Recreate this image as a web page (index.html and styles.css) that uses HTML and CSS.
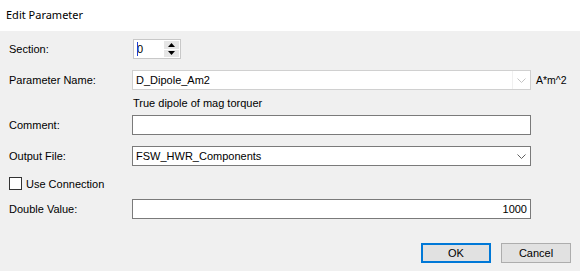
FILE: index.html
```html
<!DOCTYPE html>
<html lang="en">
<head>
  <meta charset="UTF-8">
  <title>Edit Parameter</title>
  <link rel="stylesheet" href="styles.css">
</head>
<body>

  <div class="dialog">
    <div class="titlebar">Edit Parameter</div>

    <div class="form">
      <div class="row row-section">
        <div class="label">Section:</div>
        <div class="spinner">
          <div class="spinner-text"><span class="caret"></span>0</div>
          <div class="spinner-buttons">
            <div class="spin-btn"><svg width="7" height="4" viewBox="0 0 7 4"><path d="M0 4 L3.5 0 L7 4 Z" fill="#000"/></svg></div>
            <div class="spin-btn"><svg width="7" height="4" viewBox="0 0 7 4"><path d="M0 0 L3.5 4 L7 0 Z" fill="#000"/></svg></div>
          </div>
        </div>
      </div>

      <div class="row row-param">
        <div class="label">Parameter Name:</div>
        <div class="combo combo-disabled">
          <div class="combo-text">D_Dipole_Am2</div>
          <div class="combo-arrow">
            <svg width="9" height="5" viewBox="0 0 9 5"><path d="M0.5 0.5 L4.5 4.5 L8.5 0.5" fill="none" stroke="#c4c4c4" stroke-width="1"/></svg>
          </div>
        </div>
        <div class="unit">A*m^2</div>
      </div>

      <div class="row row-hint">
        <div class="label"></div>
        <div class="hint">True dipole of mag torquer</div>
      </div>

      <div class="row row-comment">
        <div class="label">Comment:</div>
        <div class="textbox"></div>
      </div>

      <div class="row row-output">
        <div class="label">Output File:</div>
        <div class="combo">
          <div class="combo-text">FSW_HWR_Components</div>
          <div class="combo-arrow plain">
            <svg width="9" height="5" viewBox="0 0 9 5"><path d="M0.5 0.5 L4.5 4.5 L8.5 0.5" fill="none" stroke="#606060" stroke-width="1"/></svg>
          </div>
        </div>
      </div>

      <div class="row row-check">
        <div class="checkbox"></div>
        <div class="check-label">Use Connection</div>
      </div>

      <div class="row row-double">
        <div class="label">Double Value:</div>
        <div class="textbox number">1000</div>
      </div>

      <div class="actions">
        <div class="button default">OK</div>
        <div class="button">Cancel</div>
      </div>
    </div>
  </div>

</body>
</html>
```

FILE: styles.css
```css
body {
  margin: 0;
  background-color: #f0f0f0;
  font-family: 'Liberation Sans', Arial, sans-serif;
  font-size: 11px;
  color: #000;
}

.dialog {
  width: 580px;
  height: 271px;
  background-color: #f0f0f0;
}

.titlebar {
  height: 31px;
  background-color: #fff;
  padding-left: 6px;
  font-family: 'Noto Sans', sans-serif;
  font-size: 11px;
  line-height: 30px;
  color: #000;
}

.form {
  padding-left: 9px;
}

.row {
  display: flex;
  align-items: center;
}

.label {
  width: 123px;
  flex-shrink: 0;
}

.row-section {
  margin-top: 8px;
  height: 20px;
}

.row-param {
  margin-top: 11px;
  height: 20px;
}

.row-hint {
  margin-top: 6px;
  height: 14px;
}

.row-comment {
  margin-top: 5px;
  height: 20px;
}

.row-output {
  margin-top: 11px;
  height: 20px;
}

.row-check {
  margin-top: 11px;
  height: 13px;
}

.row-double {
  margin-top: 9px;
  height: 20px;
}

/* numeric spinner */
.spinner {
  margin-left: 1px;
  width: 48px;
  height: 20px;
  box-sizing: border-box;
  border: 1px solid #c8c8c8;
  background: #fff;
  display: flex;
}

.spinner-text {
  flex: 1;
  padding-left: 3px;
  line-height: 18px;
  position: relative;
}

.caret {
  position: absolute;
  left: 3px;
  top: 2px;
  width: 1px;
  height: 14px;
  background: #1e3fd0;
}

.spinner-buttons {
  width: 15px;
  display: flex;
  flex-direction: column;
  gap: 1px;
  padding: 1px 1px 1px 0;
}

.spin-btn {
  flex: 1;
  background: #e6e6e6;
  display: flex;
  align-items: center;
  justify-content: center;
}

/* combo boxes */
.combo {
  width: 399px;
  height: 20px;
  box-sizing: border-box;
  border: 1px solid #7a7a7a;
  background: #fff;
  display: flex;
}

.combo-disabled {
  border-color: #d0d0d0;
}

.combo-text {
  flex: 1;
  padding-left: 3px;
  line-height: 18px;
}

.combo-arrow {
  width: 17px;
  border-left: 1px solid #f0f0f0;
  display: flex;
  align-items: center;
  justify-content: center;
}

.combo-arrow.plain {
  border-left: none;
}

.unit {
  margin-left: 5px;
  font-size: 10.5px;
}

.hint {
  margin-left: 1px;
}

.textbox {
  width: 399px;
  height: 20px;
  box-sizing: border-box;
  border: 1px solid #7a7a7a;
  background: #fff;
  line-height: 18px;
}

.textbox.number {
  text-align: right;
  padding-right: 3px;
}

/* checkbox */
.checkbox {
  width: 13px;
  height: 13px;
  box-sizing: border-box;
  border: 1px solid #333;
  background: #fff;
}

.check-label {
  margin-left: 4px;
}

/* dialog buttons */
.actions {
  display: flex;
  justify-content: flex-end;
  gap: 10px;
  margin-top: 24px;
  padding-right: 9px;
}

.button {
  width: 70px;
  height: 20px;
  box-sizing: border-box;
  border: 1px solid #adadad;
  background: #e1e1e1;
  text-align: center;
  line-height: 18px;
}

.button.default {
  border: 2px solid #0078d7;
  line-height: 16px;
}
```
